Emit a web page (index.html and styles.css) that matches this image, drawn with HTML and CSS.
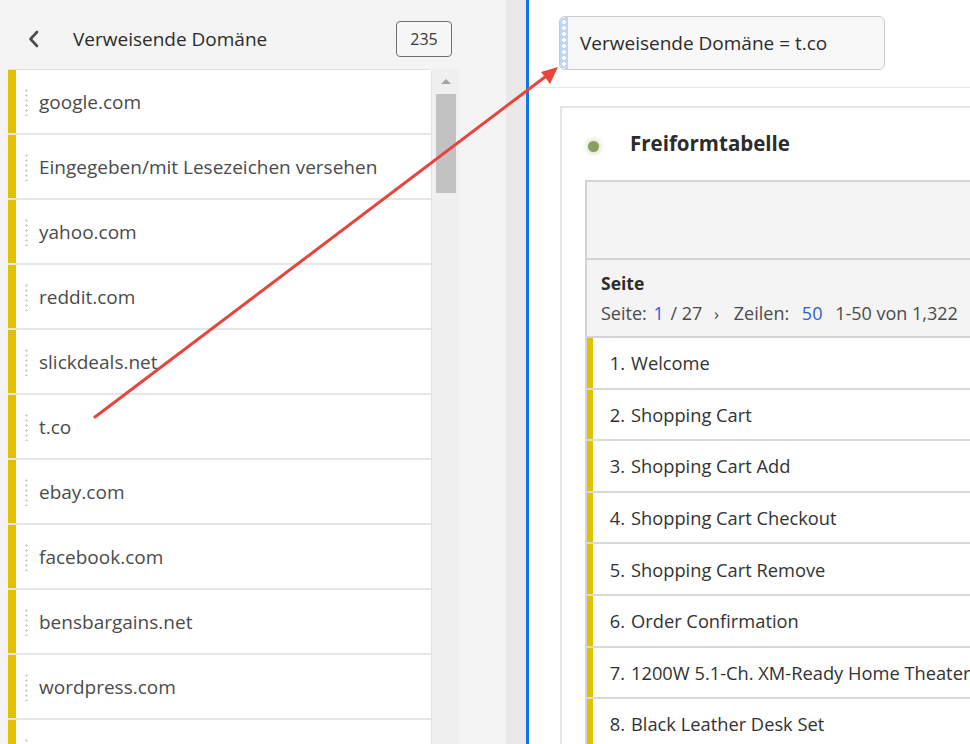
FILE: index.html
```html
<!DOCTYPE html>
<html lang="de">
<head>
<meta charset="utf-8">
<title>Verweisende Domäne</title>
<link rel="stylesheet" href="styles.css">
</head>
<body>
<div class="app">
  <aside class="left">
    <div class="left-head">
      <svg class="back" width="14" height="18" viewBox="0 0 14 18"><path d="M10 2 L3.5 9 L10 16" fill="none" stroke="#4b4b4b" stroke-width="2.6" stroke-linecap="round" stroke-linejoin="round"/></svg>
      <span class="left-title">Verweisende Domäne</span>
      <span class="count">235</span>
    </div>
    <div class="list-wrap">
      <ul class="list">
        <li class="item"><span class="grip"></span>google.com</li>
        <li class="item"><span class="grip"></span>Eingegeben/mit Lesezeichen versehen</li>
        <li class="item"><span class="grip"></span>yahoo.com</li>
        <li class="item"><span class="grip"></span>reddit.com</li>
        <li class="item"><span class="grip"></span>slickdeals.net</li>
        <li class="item"><span class="grip"></span>t.co</li>
        <li class="item"><span class="grip"></span>ebay.com</li>
        <li class="item"><span class="grip"></span>facebook.com</li>
        <li class="item"><span class="grip"></span>bensbargains.net</li>
        <li class="item"><span class="grip"></span>wordpress.com</li>
        <li class="item"><span class="grip"></span></li>
      </ul>
      <div class="scrollbar">
        <span class="scroll-up"></span>
        <span class="thumb"></span>
      </div>
    </div>
  </aside>
  <div class="splitter"></div>
  <main class="right">
    <div class="filter-bar">
      <div class="pill"><span class="pill-grip"></span><span class="pill-text">Verweisende Domäne = t.co</span></div>
    </div>
    <div class="canvas">
      <section class="card">
        <div class="card-head">
          <span class="dot"></span>
          <h2 class="card-title">Freiformtabelle</h2>
        </div>
        <div class="table">
          <div class="thead-top"></div>
          <div class="thead-dim">
            <div class="dim-name">Seite</div>
            <div class="pager">Seite: <span class="blue">1</span> <span class="sep">/ 27</span> <span class="chev">›</span> Zeilen: <span class="blue rows">50</span> <span class="range">1-50 von 1,322</span></div>
          </div>
          <div class="row"><span class="num">1.</span><span>Welcome</span></div>
          <div class="row"><span class="num">2.</span><span>Shopping Cart</span></div>
          <div class="row"><span class="num">3.</span><span>Shopping Cart Add</span></div>
          <div class="row"><span class="num">4.</span><span>Shopping Cart Checkout</span></div>
          <div class="row"><span class="num">5.</span><span>Shopping Cart Remove</span></div>
          <div class="row"><span class="num">6.</span><span>Order Confirmation</span></div>
          <div class="row"><span class="num">7.</span><span>1200W 5.1-Ch. XM-Ready Home Theater</span></div>
          <div class="row"><span class="num">8.</span><span>Black Leather Desk Set</span></div>
        </div>
      </section>
    </div>
  </main>
</div>
<svg class="arrow" width="970" height="744" viewBox="0 0 970 744">
  <line x1="95" y1="417" x2="549" y2="74" stroke="#e5453d" stroke-width="3" stroke-linecap="round"/>
  <polygon points="558,67 541,72 550,84" fill="#e5453d"/>
</svg>
</body>
</html>
```

FILE: styles.css
```css
* { box-sizing: border-box; margin: 0; padding: 0; }
html, body { width: 970px; height: 744px; overflow: hidden; }
body {
  font-family: "Open Sans", "Noto Sans", sans-serif;
  color: #4b4b4b;
  background: #fff;
  position: relative;
}
.app { display: flex; height: 744px; overflow: hidden; }

/* left panel */
.left { width: 506px; flex-shrink: 0; background: #f4f4f4; display: flex; flex-direction: column; overflow: hidden; }
.left-head { height: 69px; flex-shrink: 0; display: flex; align-items: center; padding: 8px 0 0 27px; }
.back { margin-top: 1px; }
.left-title { margin-left: 32px; font-size: 19px; color: #2c2c2c; }
.count {
  margin-left: auto; margin-right: 54px; width: 56px; height: 36px;
  border: 1px solid #707070; border-radius: 4px;
  display: flex; align-items: center; justify-content: center;
  font-size: 16px; color: #3a3a3a; background: #f6f6f6;
}
.list-wrap { display: flex; padding-left: 8px; flex: 1; min-height: 0; overflow: hidden; }
.list {
  list-style: none; width: 424px; background: #fff;
  border: 1px solid #e1e1e1; border-left: none; border-bottom: none;
  border-radius: 0 4px 0 0;
}
.item {
  height: 65px; display: flex; align-items: center;
  font-size: 19px; color: #4b4b4b;
  background: linear-gradient(to right, #e2c100 8px, #fff 8px);
  border-bottom: 2px solid #e6e6e6;
  padding-left: 17px;
}
.grip {
  width: 3px; height: 28px; margin-right: 11px;
  background: radial-gradient(circle, #d2d2d2 1.2px, transparent 1.4px) 0 0 / 3px 5px repeat-y;
}
.scrollbar { width: 27px; background: #f0f0f0; position: relative; }
.scroll-up {
  position: absolute; left: 9px; top: 10px; width: 0; height: 0;
  border-left: 5px solid transparent; border-right: 5px solid transparent;
  border-bottom: 5px solid #a3a3a3;
}
.thumb { position: absolute; left: 4px; top: 25px; width: 20px; height: 99px; background: #c2c2c2; }

.splitter { width: 23px; flex-shrink: 0; background: #e9e9e9; border-right: 3px solid #1473e6; }

/* right panel */
.right { flex: 1; display: flex; flex-direction: column; min-width: 0; overflow: hidden; }
.filter-bar { height: 88px; flex-shrink: 0; border-bottom: 1px solid #e8e8e8; padding: 16px 0 0 30px; }
.pill {
  width: 326px; height: 54px; display: flex; align-items: center;
  background: #f8f8f8; border: 1px solid #cacaca; border-radius: 6px; overflow: hidden;
}
.pill-grip {
  width: 8px; height: 100%;
  background: radial-gradient(circle, #fff 1.6px, transparent 1.9px) 0 14px / 8px 6px repeat-y, #bcd6f8;
}
.pill-text { margin-left: 12px; font-size: 19px; color: #2c2c2c; }

.canvas { flex: 1; padding: 18px 0 0 31px; min-height: 0; overflow: hidden; }
.card {
  height: 100%; background: #fff; overflow: hidden;
  border: 2px solid #e6e6e6; border-right: none; border-bottom: none;
  padding: 0 0 0 23px;
}
.card-head { height: 72px; display: flex; align-items: center; }
.dot {
  width: 11px; height: 11px; border-radius: 50%; background: #8c9f60;
  margin-left: 3px; margin-top: 4px; box-shadow: 0 0 4px 2px rgba(160,180,110,0.35);
}
.card-title { margin-left: 31px; font-size: 20.5px; font-weight: 700; color: #2c2c2c; margin-bottom: 3px; }

.table { border: 2px solid #d4d4d4; border-right: none; border-bottom: none; }
.thead-top { height: 78px; background: #f4f4f4; border-bottom: 2px solid #d4d4d4; }
.thead-dim { height: 78px; background: #f4f4f4; border-bottom: 2px solid #d4d4d4; padding: 11px 0 0 14px; }
.dim-name { font-size: 17.5px; font-weight: 700; color: #2c2c2c; line-height: 24px; }
.pager { font-size: 18px; color: #4b4b4b; line-height: 24px; margin-top: 6px; white-space: nowrap; }
.blue { color: #2d5fd3; margin: 0 3px 0 2px; }
.blue.rows { margin-left: 8px; }
.sep { margin-left: -1px; }
.chev { margin: 0 10px 0 7px; font-size: 17px; }
.range { margin-left: 5px; }
.row {
  height: 51.6px; display: flex; align-items: center; white-space: nowrap;
  font-size: 18.3px; color: #323232;
  background: linear-gradient(to right, #e2c100 6px, #fff 6px);
  border-bottom: 2px solid #d9d9d9;
}
.num { width: 38px; flex-shrink: 0; text-align: right; margin-right: 6px; }

.arrow { position: absolute; left: 0; top: 0; pointer-events: none; }
```
